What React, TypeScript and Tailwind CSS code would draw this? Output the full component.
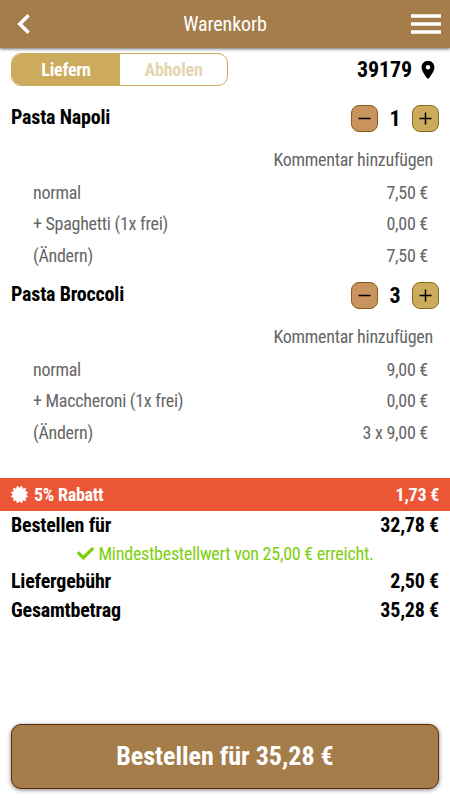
import { FaCheck, FaCertificate } from "react-icons/fa";
import { MdLocationOn } from "react-icons/md";

type Item = {
  name: string;
  amount: number;
  rows: [string, string][];
};

const items: Item[] = [
  {
    name: "Pasta Napoli",
    amount: 1,
    rows: [
      ["normal", "7,50 €"],
      ["+ Spaghetti (1x frei)", "0,00 €"],
      ["(Ändern)", "7,50 €"],
    ],
  },
  {
    name: "Pasta Broccoli",
    amount: 3,
    rows: [
      ["normal", "9,00 €"],
      ["+ Maccheroni (1x frei)", "0,00 €"],
      ["(Ändern)", "3 x 9,00 €"],
    ],
  },
];

const Header = () => (
  <header className="flex h-12 shrink-0 items-center justify-between bg-[#a57d4b] pr-[9px] pl-[17px] text-white shadow-[0_1px_3px_rgba(0,0,0,0.6)]">
    <svg width="22" height="22" viewBox="0 0 22 22" fill="none">
      <path d="M11.6 2.2 2.8 11l8.8 8.8" stroke="currentColor" strokeWidth="3.5" />
    </svg>
    <h1 className="text-[20px] leading-6 tracking-[-0.1px]">Warenkorb</h1>
    <svg width="30" height="20" viewBox="0 0 30 20" fill="currentColor">
      <path d="M0 .2h30v3.5H0zM0 8.2h30v3.5H0zM0 16.2h30v3.5H0z" />
    </svg>
  </header>
);

const AmountButton = ({ plus }: { plus?: boolean }) => (
  <button
    className={`flex size-[27px] items-center justify-center rounded-lg border ${
      plus ? "border-[#8a6a1c] bg-[#ccab5c]" : "border-[#8a5a1c] bg-[#c8935c]"
    }`}
  >
    <svg width="13" height="13" viewBox="0 0 13 13" stroke="#000" strokeWidth="1.5">
      <path d={plus ? "M.5 6.5h12M6.5.5v12" : "M.5 6.5h12"} />
    </svg>
  </button>
);

const CartItem = ({ item }: { item: Item }) => (
  <section className="h-[177px]">
    <div className="flex h-[27px] items-center justify-between px-[11px]">
      <h2 className="pb-[3px] text-[20px] font-bold tracking-[-0.2px]">{item.name}</h2>
      <div className="flex items-center">
        <AmountButton />
        <span className="w-[34px] text-center text-[22px] font-bold">{item.amount}</span>
        <AmountButton plus />
      </div>
    </div>
    <div className="mt-3 mb-[0.5px] pr-[17px] text-right text-[18px] leading-8 tracking-[-0.27px] text-[#666]">
      Kommentar hinzufügen
    </div>
    {item.rows.map(([label, price]) => (
      <div
        key={label}
        className="flex justify-between pr-[22px] pl-[33px] text-[18px] leading-[31.5px] tracking-[-0.27px] text-[#666]"
      >
        <span>{label}</span>
        <span>{price}</span>
      </div>
    ))}
  </section>
);

const Sum = ({ label, value }: { label: string; value: string }) => (
  <div className="flex h-7 items-center justify-between px-[11px] text-[20px] font-bold tracking-[-0.2px]">
    <span>{label}</span>
    <span>{value}</span>
  </div>
);

export default function App() {
  return (
    <div className="flex h-[800px] w-[450px] flex-col overflow-hidden bg-white font-['Roboto_Condensed',Roboto,sans-serif] text-black [font-stretch:75%]">
      <Header />

      <div className="mt-[5px] flex h-[33px] items-center justify-between px-[11px]">
        <div className="flex h-full w-[217px] overflow-hidden rounded-[10px] border border-[#ccab5c] text-[18px] leading-[31px] font-bold tracking-[-0.2px]">
          <span className="w-[108px] bg-[#ccab5c] text-center text-white">Liefern</span>
          <span className="flex-1 text-center text-[#e5d4ad]">Abholen</span>
        </div>
        <div className="flex items-center gap-[5px] text-[22px] font-bold tracking-[-0.1px]">
          39179
          <MdLocationOn size={22} />
        </div>
      </div>

      <div className="mt-[19px] h-[373px]">
        {items.map((item) => (
          <CartItem key={item.name} item={item} />
        ))}
      </div>

      <div className="flex h-[33px] items-center justify-between bg-[#eb5636] px-[11px] text-[18px] font-bold tracking-[-0.25px] text-white">
        <span className="flex items-center gap-[6px]">
          <FaCertificate size={17} />
          5% Rabatt
        </span>
        <span>1,73 €</span>
      </div>
      <Sum label="Bestellen für" value="32,78 €" />
      <div className="flex h-7 items-center justify-center gap-[5px] text-[18px] tracking-[-0.25px] text-[#7bcf0b]">
        <FaCheck size={17} />
        Mindestbestellwert von 25,00 € erreicht.
      </div>
      <Sum label="Liefergebühr" value="2,50 €" />
      <div className="pt-px">
        <Sum label="Gesamtbetrag" value="35,28 €" />
      </div>

      <button className="mx-[11px] mt-auto mb-[11px] h-[65px] rounded-[10px] border border-[#5a2c0c] bg-[#a57d4b] text-[26px] font-bold text-white shadow-[0_1px_4px_rgba(0,0,0,0.5)]">
        Bestellen für 35,28 €
      </button>
    </div>
  );
}
